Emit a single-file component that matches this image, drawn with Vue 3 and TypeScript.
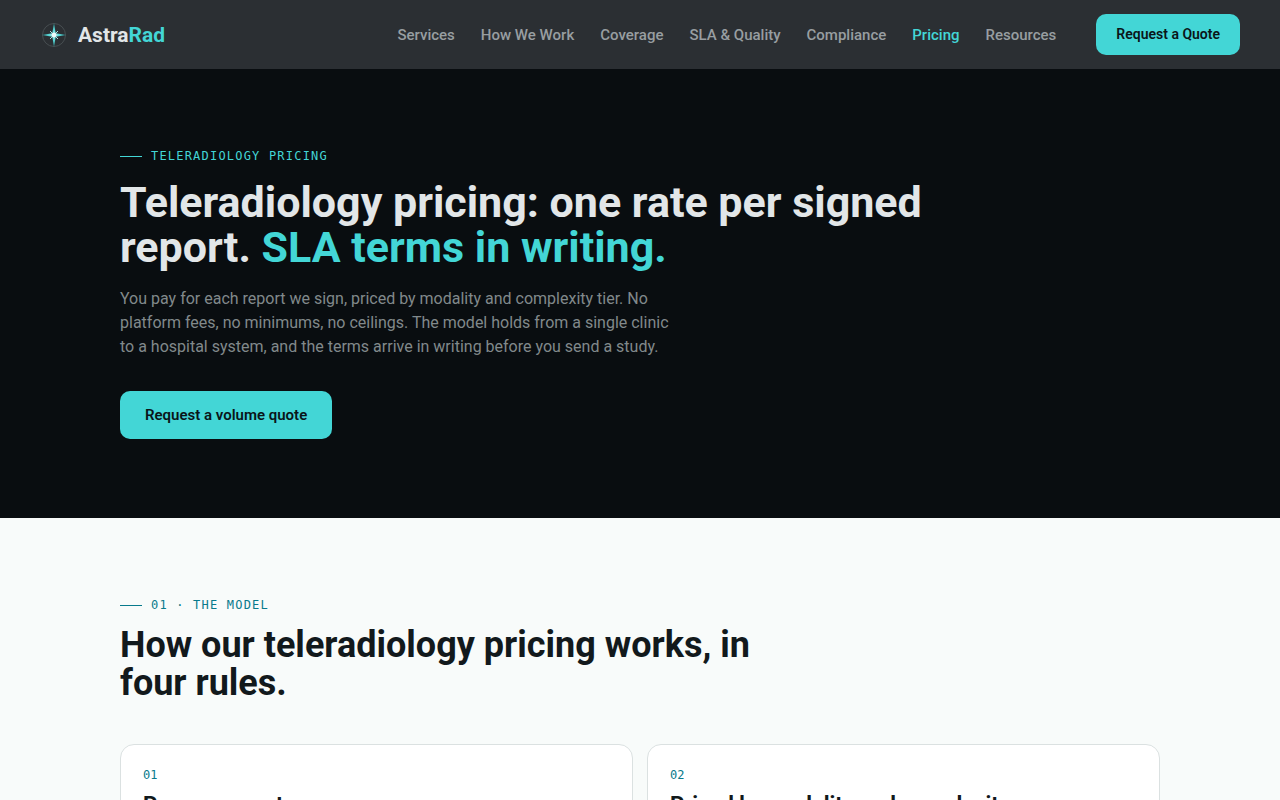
<script setup lang="ts">
interface NavItem {
  label: string
  active?: boolean
}
interface Rule {
  number: string
  title: string
}

const navItems: NavItem[] = [
  { label: 'Services' },
  { label: 'How We Work' },
  { label: 'Coverage' },
  { label: 'SLA & Quality' },
  { label: 'Compliance' },
  { label: 'Pricing', active: true },
  { label: 'Resources' },
]

const rules: Rule[] = [
  { number: '01', title: 'Pay per report' },
  { number: '02', title: 'Priced by modality and complexity' },
]
</script>

<template>
  <div class="page">
    <header class="topbar">
      <a class="brand" href="#">
        <svg class="brand-mark" viewBox="0 0 28 28" aria-hidden="true">
          <defs>
            <radialGradient id="ray" gradientUnits="userSpaceOnUse" cx="14" cy="14" r="12">
              <stop offset="0" stop-color="#d8fbfb" />
              <stop offset="0.35" stop-color="#5fdcdc" />
              <stop offset="1" stop-color="#2f9f9f" />
            </radialGradient>
          </defs>
          <circle cx="14" cy="14" r="11.5" fill="none" stroke="#474e51" stroke-width="1" />
          <path d="M14 2 L15.7 12.3 L26 14 L15.7 15.7 L14 26 L12.3 15.7 L2 14 L12.3 12.3 Z" fill="url(#ray)" />
          <path d="M10.3 10.3 L17.7 17.7 M17.7 10.3 L10.3 17.7" stroke="#a8e6e6" stroke-width="1" stroke-linecap="round" />
          <circle cx="14" cy="14" r="2.3" fill="#effafa" />
        </svg>
        <span class="brand-name">Astra<span class="accent">Rad</span></span>
      </a>
      <nav class="nav" aria-label="Main">
        <a
          v-for="item in navItems"
          :key="item.label"
          href="#"
          class="nav-link"
          :class="{ active: item.active }"
          :aria-current="item.active ? 'page' : undefined"
        >{{ item.label }}</a>
        <a class="button button-small" href="#">Request a Quote</a>
      </nav>
    </header>

    <main>
      <section class="hero">
        <div class="container">
          <p class="eyebrow">Teleradiology pricing</p>
          <h1>Teleradiology pricing: one rate per signed report. <span class="accent">SLA terms in writing.</span></h1>
          <p class="lead">
            You pay for each report we sign, priced by modality and complexity tier. No platform fees, no minimums, no
            ceilings. The model holds from a single clinic to a hospital system, and the terms arrive in writing before
            you send a study.
          </p>
          <a class="button button-large" href="#">Request a volume quote</a>
        </div>
      </section>

      <section class="model">
        <div class="container">
          <p class="eyebrow">01 · The model</p>
          <h2>How our teleradiology pricing works, in four rules.</h2>
          <div class="cards">
            <article v-for="rule in rules" :key="rule.number" class="card">
              <p class="card-number">{{ rule.number }}</p>
              <h3>{{ rule.title }}</h3>
            </article>
          </div>
        </div>
      </section>
    </main>
  </div>
</template>

<style>
body {
  margin: 0;
  background: #f8fbfa;
}
</style>

<style scoped>
.page {
  font-family: Roboto, "Liberation Sans", sans-serif;
  color: #12191c;
}
.page * {
  box-sizing: border-box;
}
a {
  color: inherit;
  text-decoration: none;
}
.accent {
  color: #43d6d6;
}
.topbar {
  display: flex;
  align-items: center;
  justify-content: space-between;
  padding: 14px 40px;
  background: #2b2f33;
}
.brand {
  display: flex;
  align-items: center;
  gap: 10px;
}
.brand-mark {
  width: 28px;
  height: 28px;
}
.brand-name {
  font-size: 21px;
  line-height: 24px;
  font-weight: 700;
  color: #e2e6e8;
}
.nav {
  display: flex;
  align-items: center;
  gap: 26px;
}
.nav-link {
  font-size: 15px;
  line-height: 20px;
  font-weight: 500;
  color: #989ea1;
}
.nav-link.active {
  color: #43d6d6;
}
.button {
  display: inline-block;
  border-radius: 10px;
  background: #43d6d6;
  color: #0a1519;
  font-weight: 600;
}
.button-small {
  margin-left: 14px;
  padding: 10px 20px;
  font-size: 14px;
  line-height: 21px;
}
.button-large {
  padding: 12px 25px;
  font-size: 15px;
  line-height: 24px;
}
.container {
  max-width: 1040px;
  margin: 0 auto;
}
.hero {
  padding: 78px 40px 79px;
  background: #090d10;
}
.eyebrow {
  display: flex;
  align-items: center;
  gap: 9px;
  margin: 0;
  font-family: "DejaVu Sans Mono", monospace;
  font-size: 12px;
  line-height: 18px;
  letter-spacing: 0.1em;
  text-transform: uppercase;
  color: #43d6d6;
}
.eyebrow::before {
  content: "";
  width: 22px;
  height: 1px;
  background: currentColor;
}
h1,
h2,
h3 {
  margin: 0;
  font-weight: 700;
}
h1 {
  max-width: 840px;
  margin-top: 15px;
  font-size: 43px;
  line-height: 45px;
  color: #e2e6e8;
}
.lead {
  max-width: 560px;
  margin: 17px 0 32px;
  font-size: 16px;
  line-height: 24px;
  color: #81898b;
}
.model {
  padding: 78px 40px;
  background: #f8fbfa;
}
.model .eyebrow {
  color: #087a8c;
}
h2 {
  max-width: 680px;
  margin-top: 12px;
  font-size: 36px;
  line-height: 38px;
}
.cards {
  display: grid;
  grid-template-columns: 1fr 1fr;
  gap: 14px;
  margin-top: 42px;
}
.card {
  padding: 22px;
  border: 1px solid #dbe1e1;
  border-radius: 14px;
  background: #ffffff;
}
.card-number {
  margin: 0;
  font-family: "DejaVu Sans Mono", monospace;
  font-size: 12px;
  line-height: 16px;
  color: #087a8c;
}
h3 {
  margin-top: 8px;
  font-size: 22px;
  line-height: 28px;
}
</style>
